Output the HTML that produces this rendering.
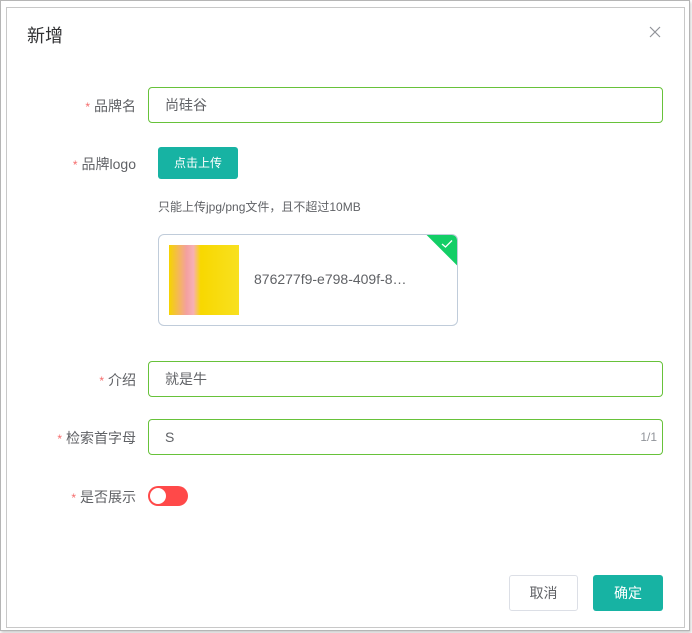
<!DOCTYPE html>
<html><head><meta charset="utf-8"><style>
*{box-sizing:border-box;margin:0;padding:0}
body{width:692px;height:633px;background:#fff;font-family:"Liberation Sans","Noto Sans CJK SC",sans-serif;position:relative;overflow:hidden}
.outer{position:absolute;left:0;top:0;width:690px;height:631px;border:1px solid #b5b5b5;box-shadow:1px 2px 3px #ccc}
.dlg{position:absolute;left:6px;top:7px;width:679px;height:621px;border:1px solid #c8c8c8}
.abs{position:absolute}
.title{left:27px;top:22px;font-size:18px;color:#303133}
.lbl{font-size:14px;color:#606266;text-align:right;width:136px;left:0}
.lbl b{color:#f56c6c;font-weight:normal;margin-right:4px;font-size:12px}
.inp{left:148px;width:515px;height:36px;border:1px solid #67c23a;border-radius:4px;font-size:14px;color:#606266;padding-left:16px;line-height:34px}
.btn{border-radius:3px;font-size:14px;text-align:center}
</style></head><body>
<div class="outer"></div>
<div class="dlg"></div>
<div class="abs title">新增</div>
<svg class="abs" style="left:649px;top:26px" width="12" height="12"><path d="M1 1L11 11M11 1L1 11" stroke="#909399" stroke-width="1.2"/></svg>
<div class="abs lbl" style="top:96px"><b>*</b>品牌名</div>
<div class="abs inp" style="top:87px">尚硅谷</div>
<div class="abs lbl" style="top:154px"><b>*</b>品牌logo</div>
<div class="abs btn" style="left:158px;top:147px;width:80px;height:32px;background:#17b3a3;color:#fff;font-size:12px;line-height:32px">点击上传</div>
<div class="abs" style="left:158px;top:198px;font-size:12px;color:#606266">只能上传jpg/png文件，且不超过10MB</div>
<div class="abs" style="left:158px;top:234px;width:300px;height:92px;border:1px solid #c0ccda;border-radius:6px;overflow:hidden">
<div class="abs" style="left:10px;top:10px;width:70px;height:70px;background:linear-gradient(90deg,#f5d400 0%,#f3a0a0 25%,#f7b0b5 35%,#f8d800 45%,#f8e020 100%)"></div>
<div class="abs" style="left:95px;top:36px;font-size:14px;color:#606266">876277f9-e798-409f-8…</div>
<div class="abs" style="right:-17px;top:-7px;width:46px;height:26px;background:#13ce66;transform:rotate(45deg)"></div>
<svg class="abs" style="right:4px;top:4px" width="12" height="10"><path d="M1 5L4.5 8L11 1.5" stroke="#fff" stroke-width="1.3" fill="none"/></svg>
</div>
<div class="abs lbl" style="top:370px"><b>*</b>介绍</div>
<div class="abs inp" style="top:361px">就是牛</div>
<div class="abs lbl" style="top:428px"><b>*</b>检索首字母</div>
<div class="abs inp" style="top:419px">S<span style="position:absolute;right:5px;top:0;font-size:12px;color:#909399">1/1</span></div>
<div class="abs lbl" style="top:487px"><b>*</b>是否展示</div>
<div class="abs" style="left:148px;top:486px;width:40px;height:20px;border-radius:10px;background:#ff4949"><div class="abs" style="left:2px;top:2px;width:16px;height:16px;border-radius:50%;background:#fff"></div></div>
<div class="abs btn" style="left:509px;top:575px;width:69px;height:36px;border:1px solid #dcdfe6;color:#606266;line-height:34px">取消</div>
<div class="abs btn" style="left:593px;top:575px;width:70px;height:36px;background:#17b3a3;color:#fff;line-height:36px">确定</div>
</body></html>
